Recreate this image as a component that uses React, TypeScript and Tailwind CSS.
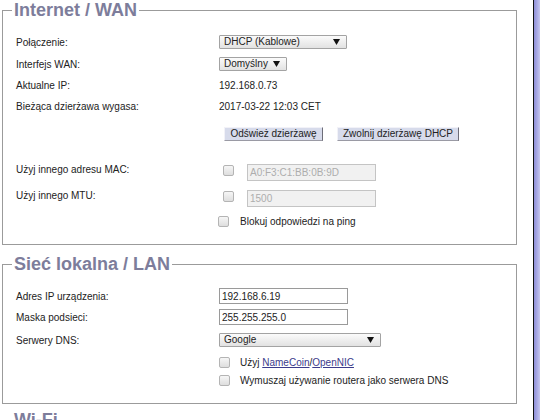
import React from "react";

function Arrow() {
  return (
    <svg width="7" height="6" viewBox="0 0 7 6" className="shrink-0">
      <path d="M0 0 L7 0 L3.5 6 Z" fill="#111" />
    </svg>
  );
}

function Select({ text, w }: { text: string; w: string }) {
  return (
    <div
      className={`${w} h-[14px] flex items-center justify-between pl-[4px] pr-[6px] border border-[#a3a3a3] rounded-[1px] bg-gradient-to-b from-[#fbfbfb] to-[#e2e2e2] text-[#222] leading-none`}
    >
      <span>{text}</span>
      <Arrow />
    </div>
  );
}

function Box() {
  return (
    <span className="inline-block w-[11px] h-[11px] shrink-0 rounded-[2px] border border-[#b4b4b4] bg-gradient-to-b from-[#f6f6f6] to-[#dedede]" />
  );
}

function Btn({ text, w }: { text: string; w: string }) {
  return (
    <div
      className={`${w} h-[14px] flex items-center justify-center bg-[#d7dbeb] border-t border-l border-t-[#f2f2f8] border-l-[#f2f2f8] border-r border-b border-r-[#6d6d78] border-b-[#9a9aa4] text-[#222] leading-none`}
    >
      {text}
    </div>
  );
}

function Legend({ text }: { text: string }) {
  return (
    <legend className="ml-[9px] px-[2px] text-[18px] leading-[21px] font-bold text-[#7d7d9b]">
      {text}
    </legend>
  );
}

export default function App() {
  return (
    <div className="flex h-[420px] w-[540px] overflow-hidden bg-white font-['Liberation_Sans',Arial,sans-serif] text-[10px] text-[#222]">
      <div className="w-[533px] pl-[2px]">
        {/* Internet / WAN */}
        <fieldset className="w-[515px] border border-[#9b9b9b]">
          <Legend text="Internet / WAN" />
          <div className="pl-[13px] pt-[10px] pb-[17px] flex flex-col">
            <div className="flex items-center h-[22px]">
              <div className="w-[203px]">Połączenie:</div>
              <Select text="DHCP (Kablowe)" w="w-[128px]" />
            </div>
            <div className="flex items-center h-[22px]">
              <div className="w-[203px]">Interfejs WAN:</div>
              <Select text="Domyślny" w="w-[68px]" />
            </div>
            <div className="flex items-center h-[21px]">
              <div className="w-[203px]">Aktualne IP:</div>
              <div>192.168.0.73</div>
            </div>
            <div className="flex items-center h-[21px]">
              <div className="w-[203px]">Bieżąca dzierżawa wygasa:</div>
              <div>2017-03-22 12:03 CET</div>
            </div>
            <div className="flex items-center mt-[10px] pl-[208px] gap-[14px]">
              <Btn text="Odśwież dzierżawę" w="w-[99px]" />
              <Btn text="Zwolnij dzierżawę DHCP" w="w-[122px]" />
            </div>
            <div className="flex items-start h-[26px] mt-[23px]">
              <div className="w-[207px] leading-[12px]">Użyj innego adresu MAC:</div>
              <div className="mt-[1px] flex">
                <Box />
              </div>
              <div className="ml-[13px] w-[129px] h-[17px] flex items-center px-[2px] border border-[#c4c4c4] bg-[#f1f1f1] text-[#adadad]">
                A0:F3:C1:BB:0B:9D
              </div>
            </div>
            <div className="flex items-start h-[26px]">
              <div className="w-[207px] leading-[12px]">Użyj innego MTU:</div>
              <div className="mt-[1px] flex">
                <Box />
              </div>
              <div className="ml-[13px] w-[129px] h-[17px] flex items-center px-[2px] border border-[#c4c4c4] bg-[#f1f1f1] text-[#adadad]">
                1500
              </div>
            </div>
            <div className="flex items-center h-[11px] pl-[202px]">
              <Box />
              <span className="ml-[11px]">Blokuj odpowiedzi na ping</span>
            </div>
          </div>
        </fieldset>

        {/* Sieć lokalna / LAN */}
        <fieldset className="mt-[9px] w-[515px] border border-[#9b9b9b]">
          <Legend text="Sieć lokalna / LAN" />
          <div className="pl-[13px] pt-[13px] pb-[17px] flex flex-col">
            <div className="flex items-center h-[16px]">
              <div className="w-[203px]">Adres IP urządzenia:</div>
              <div className="w-[129px] h-[16px] flex items-center px-[2px] border border-[#9a9a9a] bg-white">
                192.168.6.19
              </div>
            </div>
            <div className="flex items-center h-[16px] mt-[5px]">
              <div className="w-[203px]">Maska podsieci:</div>
              <div className="w-[129px] h-[16px] flex items-center px-[2px] border border-[#9a9a9a] bg-white">
                255.255.255.0
              </div>
            </div>
            <div className="flex items-center h-[14px] mt-[8px]">
              <div className="w-[203px]">Serwery DNS:</div>
              <Select text="Google" w="w-[162px]" />
            </div>
            <div className="flex items-center h-[11px] mt-[10px] pl-[203px]">
              <Box />
              <span className="ml-[10px]">
                Użyj{" "}
                <span className="underline text-[#3b3b8c]">NameCoin</span>/
                <span className="underline text-[#3b3b8c]">OpenNIC</span>
              </span>
            </div>
            <div className="flex items-center h-[11px] mt-[7px] pl-[203px]">
              <Box />
              <span className="ml-[10px]">Wymuszaj używanie routera jako serwera DNS</span>
            </div>
          </div>
        </fieldset>

        {/* Wi-Fi */}
        <fieldset className="mt-[6px] w-[515px] border border-[#9b9b9b] h-[60px]">
          <Legend text="Wi-Fi" />
        </fieldset>
      </div>
      <div className="w-px bg-[#111]" />
      <div className="flex-1 bg-gradient-to-r from-[#8e8ed8] to-[#c6c6f0]" />
    </div>
  );
}
